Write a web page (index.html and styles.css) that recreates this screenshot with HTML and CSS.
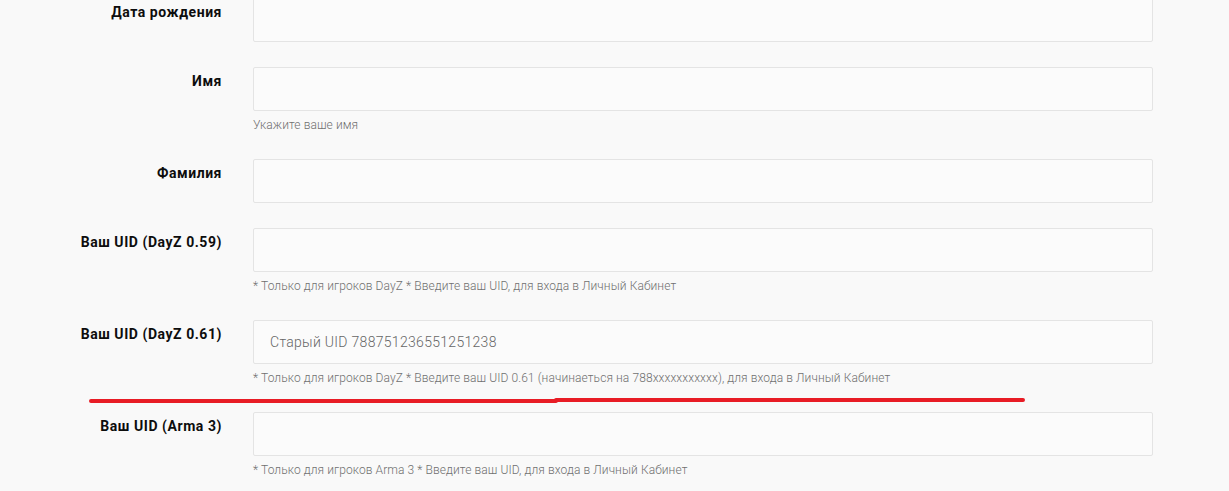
FILE: index.html
```html
<!DOCTYPE html>
<html lang="ru">
<head>
<meta charset="utf-8">
<link rel="stylesheet" href="styles.css">
</head>
<body>
<form class="form">
  <div class="row first">
    <label class="label">Дата рождения</label>
    <div class="field"><input class="input" type="text"></div>
  </div>
  <div class="row">
    <label class="label">Имя</label>
    <div class="field"><input class="input" type="text"><div class="help">Укажите ваше имя</div></div>
  </div>
  <div class="row">
    <label class="label">Фамилия</label>
    <div class="field"><input class="input" type="text"></div>
  </div>
  <div class="row">
    <label class="label">Ваш UID (DayZ 0.59)</label>
    <div class="field"><input class="input" type="text"><div class="help">* Только для игроков DayZ * Введите ваш UID, для входа в Личный Кабинет</div></div>
  </div>
  <div class="row">
    <label class="label">Ваш UID (DayZ 0.61)</label>
    <div class="field"><input class="input" type="text" value="Старый UID 788751236551251238"><div class="help">* Только для игроков DayZ * Введите ваш UID 0.61 (начинаеться на 788xxxxxxxxxxx), для входа в Личный Кабинет</div></div>
  </div>
  <div class="row">
    <label class="label">Ваш UID (Arma 3)</label>
    <div class="field"><input class="input" type="text"><div class="help">* Только для игроков Arma 3 * Введите ваш UID, для входа в Личный Кабинет</div></div>
  </div>
</form>
<svg class="mark" width="1229" height="491" viewBox="0 0 1229 491">
  <path d="M91 401 L556 401 M556 400 L1023 400" stroke="#e81c25" stroke-width="4" stroke-linecap="round" fill="none"/>
</svg>
</body>
</html>
```
FILE: styles.css
```css
html, body {
  margin: 0;
  padding: 0;
  background: #f9f9f9;
  overflow: hidden;
}
body {
  font-family: Roboto, "Liberation Sans", Arial, sans-serif;
  position: relative;
  width: 1229px;
  height: 491px;
}
.form {
  display: flex;
  flex-direction: column;
  gap: 25px;
}
.row {
  display: grid;
  grid-template-columns: 222px 900px;
  column-gap: 31px;
  align-items: start;
}
.row.first {
  margin-top: -2px;
}
.label {
  text-align: right;
  font-weight: 700;
  font-size: 14px;
  letter-spacing: 0.55px;
  line-height: 20px;
  padding-top: 4px;
  color: #0d0d0d;
}
.input {
  display: block;
  box-sizing: border-box;
  width: 900px;
  height: 44px;
  margin: 0;
  border: 1px solid #e4e4e4;
  border-radius: 2px;
  background: #fbfbfb;
  padding: 0 16px;
  font-family: Roboto, "Liberation Sans", Arial, sans-serif;
  font-size: 14px;
  letter-spacing: 0.3px;
  font-weight: 300;
  color: #666;
  outline: none;
}
.help {
  margin-top: 5px;
  font-size: 12px;
  line-height: 18px;
  letter-spacing: 0.09px;
  font-weight: 300;
  color: #707070;
}
.mark {
  position: absolute;
  left: 0;
  top: 0;
  pointer-events: none;
}
```
